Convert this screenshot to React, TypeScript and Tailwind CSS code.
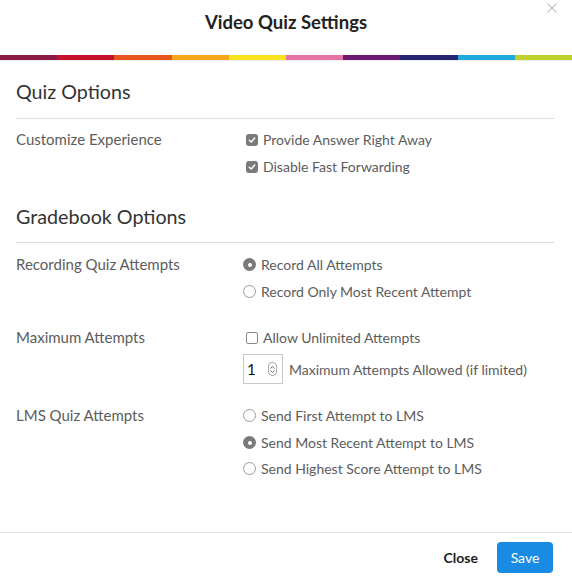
import React from "react";

const stripe = [
  "#8b1a45",
  "#c4122f",
  "#e8561f",
  "#f7a71a",
  "#f9e31f",
  "#e673a6",
  "#6e1a73",
  "#262573",
  "#1fa9df",
  "#bdd12a",
];

function Check({ checked }: { checked: boolean }) {
  return checked ? (
    <span className="w-[12px] h-[12px] rounded-[3px] bg-[#7a7a7a] flex items-center justify-center shrink-0">
      <svg width="8" height="8" viewBox="0 0 8 8">
        <path d="M1.3 4.2 L3.2 6 L6.7 2" stroke="#fff" strokeWidth="1.4" fill="none" strokeLinecap="round" strokeLinejoin="round" />
      </svg>
    </span>
  ) : (
    <span className="w-[12px] h-[12px] rounded-[2px] border border-[#8a8a8a] bg-white shrink-0" />
  );
}

function Radio({ checked }: { checked: boolean }) {
  return checked ? (
    <span className="w-[13px] h-[13px] rounded-full bg-[#7a7a7a] flex items-center justify-center shrink-0">
      <span className="w-[4px] h-[4px] rounded-full bg-white" />
    </span>
  ) : (
    <span className="w-[13px] h-[13px] rounded-full border border-[#9a9a9a] bg-white shrink-0" />
  );
}

function CheckRow({ checked, label }: { checked: boolean; label: string }) {
  return (
    <div className="h-[27px] flex items-center pl-[3px]">
      <Check checked={checked} />
      <span className="ml-[5px]">{label}</span>
    </div>
  );
}

function RadioRow({ checked, label }: { checked: boolean; label: string }) {
  return (
    <div className="h-[27px] flex items-center">
      <Radio checked={checked} />
      <span className="ml-[5px]">{label}</span>
    </div>
  );
}

export default function App() {
  return (
    <div
      className="w-[572px] h-[582px] bg-white flex flex-col relative text-[14px] text-[#5c5c5c]"
      style={{ fontFamily: "Lato, 'Open Sans', sans-serif" }}
    >
      <div className="h-[55px] pt-[11px] text-center">
        <div className="text-[18.5px] leading-[22px] font-bold text-[#222]">Video Quiz Settings</div>
      </div>
      <svg className="absolute right-[15px] top-[3px]" width="10" height="10" viewBox="0 0 10 10">
        <path d="M0.5 0.5 L9.5 9.5 M9.5 0.5 L0.5 9.5" stroke="#c2c2c2" strokeWidth="1.2" />
      </svg>
      <div className="flex h-[5px]">
        {stripe.map((c) => (
          <div key={c} className="flex-1" style={{ backgroundColor: c }} />
        ))}
      </div>
      <div className="h-[1px] bg-[#ececec]" />

      <div className="flex-1 px-4 pt-[17px]">
        <div className="text-[19.7px] leading-[28px] text-[#333]">Quiz Options</div>
        <div className="mt-[12px] h-px bg-[#dcdcdc] mr-[2px]" />
        <div className="mt-[7px] flex leading-[27px]">
          <div className="w-[227px] text-[15px]">Customize Experience</div>
          <div>
            <CheckRow checked label="Provide Answer Right Away" />
            <CheckRow checked label="Disable Fast Forwarding" />
          </div>
        </div>

        <div className="mt-[23px] text-[19.7px] leading-[28px] text-[#333]">Gradebook Options</div>
        <div className="mt-[11px] h-px bg-[#dcdcdc] mr-[2px]" />
        <div className="mt-[8px] flex leading-[27px]">
          <div className="w-[227px] text-[15px]">Recording Quiz Attempts</div>
          <div>
            <RadioRow checked label="Record All Attempts" />
            <RadioRow checked={false} label="Record Only Most Recent Attempt" />
          </div>
        </div>

        <div className="mt-[19px] flex leading-[27px]">
          <div className="w-[227px] text-[15px]">Maximum Attempts</div>
          <div>
            <CheckRow checked={false} label="Allow Unlimited Attempts" />
            <div className="mt-[3px] flex items-center">
              <div className="w-[40px] h-[30px] border border-[#c8c8c8] flex items-center pl-[3px] pr-[5px] justify-between">
                <span className="text-[#111] text-[15px]">1</span>
                <span className="w-[9px] h-[14px] rounded-[4px] border border-[#aaa] flex flex-col items-center justify-center gap-[1px]">
                  <svg width="5" height="3" viewBox="0 0 5 3">
                    <path d="M0.5 2.5 L2.5 0.5 L4.5 2.5" stroke="#555" strokeWidth="0.9" fill="none" />
                  </svg>
                  <svg width="5" height="3" viewBox="0 0 5 3">
                    <path d="M0.5 0.5 L2.5 2.5 L4.5 0.5" stroke="#555" strokeWidth="0.9" fill="none" />
                  </svg>
                </span>
              </div>
              <span className="ml-[6px]">Maximum Attempts Allowed (if limited)</span>
            </div>
          </div>
        </div>

        <div className="mt-[18px] flex leading-[27px]">
          <div className="w-[227px] text-[15px]">LMS Quiz Attempts</div>
          <div>
            <RadioRow checked={false} label="Send First Attempt to LMS" />
            <RadioRow checked label="Send Most Recent Attempt to LMS" />
            <div className="-mt-[1px]">
              <RadioRow checked={false} label="Send Highest Score Attempt to LMS" />
            </div>
          </div>
        </div>
      </div>

      <div className="h-[50px] border-t border-[#e2e2e2] flex items-center justify-end pr-[19px]">
        <button className="font-bold text-[#222] text-[14px] mr-[19px]">Close</button>
        <button className="w-[56px] h-[31px] rounded-[4px] bg-[#1a8be2] text-white text-[14px]">Save</button>
      </div>
    </div>
  );
}
